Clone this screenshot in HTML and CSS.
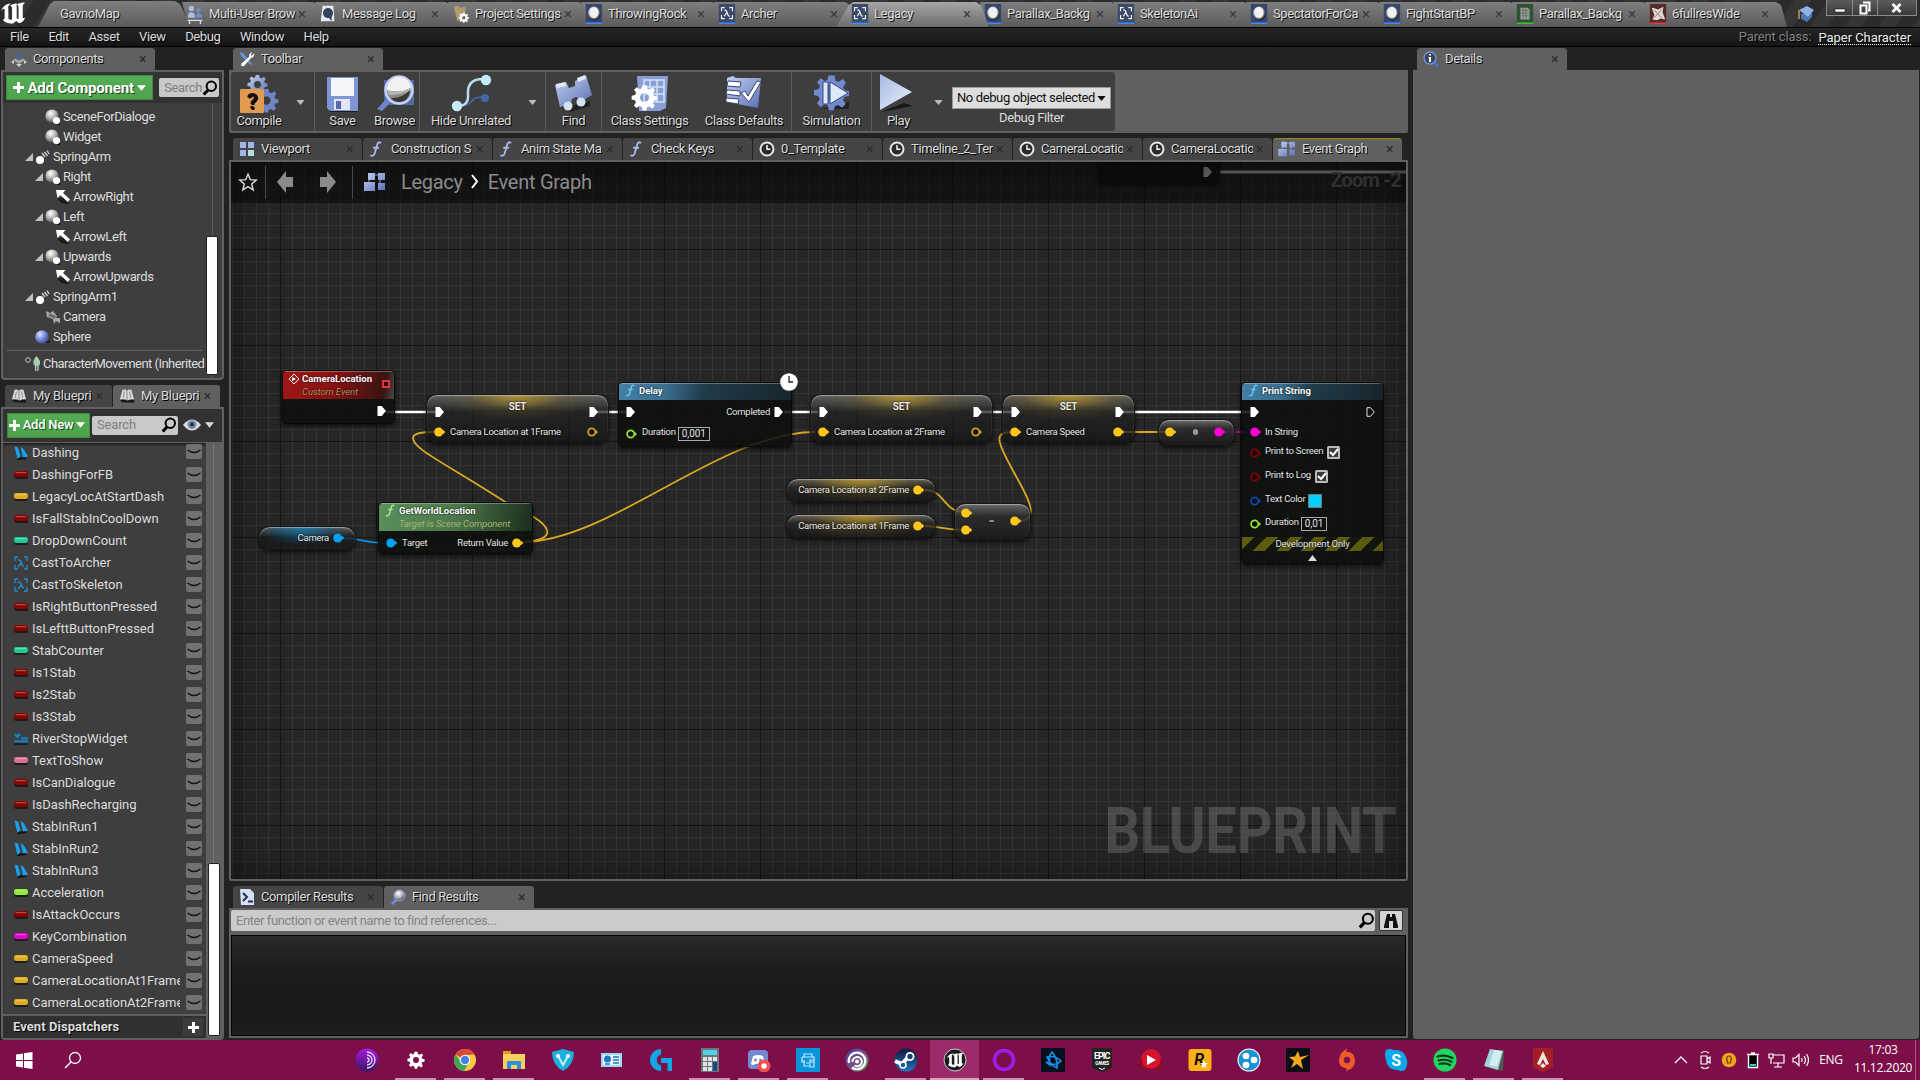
FILE: index.html
```html
<!DOCTYPE html>
<html lang="en">
<head>
<meta charset="utf-8">
<title>Legacy - Event Graph</title>
<link rel="stylesheet" href="styles.css">
</head>
<body>
<svg class="defs" width="0" height="0" aria-hidden="true">
  <defs>
    <linearGradient id="gBlue" x1="0" y1="0" x2="1" y2="1"><stop offset="0" stop-color="#c6d2f3"/><stop offset="1" stop-color="#5a6fb4"/></linearGradient>
    <linearGradient id="gPlay" x1="0" y1="0" x2="1" y2="1"><stop offset="0" stop-color="#a9b8e6"/><stop offset="1" stop-color="#e6f3f8"/></linearGradient>
    <radialGradient id="gBall" cx=".4" cy=".3" r=".7"><stop offset="0" stop-color="#fff"/><stop offset=".5" stop-color="#b9b9b9"/><stop offset="1" stop-color="#555"/></radialGradient>
    <radialGradient id="gSphere" cx=".35" cy=".3" r=".7"><stop offset="0" stop-color="#dfe6ff"/><stop offset=".5" stop-color="#7d93dc"/><stop offset="1" stop-color="#3d4c8c"/></radialGradient>
    <linearGradient id="gTor" x1="0" y1="0" x2="0" y2="1"><stop offset="0" stop-color="#a51be0"/><stop offset="1" stop-color="#3b1466"/></linearGradient>
    <linearGradient id="gSteam" x1="0" y1="0" x2="0" y2="1"><stop offset="0" stop-color="#12163a"/><stop offset="1" stop-color="#1c76b8"/></linearGradient>
    <linearGradient id="gUbi" x1="0" y1="0" x2="1" y2="1"><stop offset="0" stop-color="#36469c"/><stop offset=".5" stop-color="#7a4a8c"/><stop offset="1" stop-color="#58b04c"/></linearGradient>
    <symbol id="gear" viewBox="0 0 24 24"><path fill-rule="evenodd" d="M10 1h4l.6 3.2 2 .9L19.400 3.200l2 2.400-1.800 2.800.8 2L23.400 11v3.200l-3 .6-.9 2 1.700 2.700-2.300 2.400-2.700-1.800-2 .8L13.500 23.500h-3.200l-.7-3-2-.9-2.700 1.800-2.300-2.300 1.800-2.700-.9-2L.6 13.700v-3.300l3-.6.9-2L2.700 5.200 5 2.800l2.700 1.800 1.700-.8zM12 8a4 4 0 1 0 0 8 4 4 0 0 0 0-8z"/></symbol>
    <symbol id="exec" viewBox="0 0 9 10"><path d="M.5 0h4.200L9 5 4.700 10H.5z" fill="#fff"/></symbol>
    <symbol id="execo" viewBox="0 0 9 10"><path d="M1 .7h3.500L8.300 5 4.500 9.300H1z" fill="none" stroke="#e8e8e8" stroke-width="1"/></symbol>
    <symbol id="pin" viewBox="0 0 12 10"><circle cx="4.700" cy="5" r="4.500" fill="currentColor"/><path d="M9 2.800 11.300 5 9 7.200z" fill="currentColor"/></symbol>
    <symbol id="pino" viewBox="0 0 12 10"><circle cx="4.700" cy="5" r="3.600" fill="#0d0d0d" stroke="currentColor" stroke-width="1.800"/><path d="M9 3 11 5 9 7z" fill="currentColor"/></symbol>
    <symbol id="fn" viewBox="0 0 12 15"><path d="M11 2.200C10.500.8 8.600.700 7.800 2.800L5.200 11.800C4.500 14 2.500 14.400 1.300 13.200M3.800 6.300h5.400" fill="none" stroke="currentColor" stroke-width="1.700"/></symbol>
    <symbol id="comp" viewBox="0 0 16 16"><circle cx="7" cy="7" r="6.600" fill="url(#gBall)"/><path d="M12 15.900h3v-3z" fill="#111"/><circle cx="11.500" cy="11.500" r="3.600" fill="#fff"/></symbol>
    <symbol id="spring" viewBox="0 0 16 16"><circle cx="5" cy="11" r="4" fill="#fff"/><path d="m7 4 3 4M9.500 3l3 4M12 1.500 14 5" stroke="#c8c8c8" stroke-width="1.500"/></symbol>
    <symbol id="arrow" viewBox="0 0 16 16"><path d="M2 9h8l4 5v1L6 14z" fill="#1b1b1b"/><path d="M1 1h9.500L8 4l7 6.500-2.300 2.500L5.500 6.300 2.500 9z" fill="#fff"/></symbol>
    <symbol id="cam" viewBox="0 0 16 16"><path d="M1 2 5 4 8 2 12 7 11 9 15 9 15 14 11 12 9 15 8 10 2 8z" fill="#a9a9a9"/><path d="m5 4 6 3-1 3-7-3z" fill="#6f6f6f"/></symbol>
    <symbol id="tri" viewBox="0 0 8 8"><path d="M8 0v8H0z" fill="#c0c0c0"/></symbol>
    <symbol id="down" viewBox="0 0 10 6"><path d="M0 0h10L5 6z" fill="currentColor"/></symbol>
    <symbol id="mag" viewBox="0 0 16 16"><circle cx="9.300" cy="6.300" r="4.700" fill="none" stroke="#000" stroke-width="2"/><path d="m6 10-4.300 4.500" stroke="#000" stroke-width="3"/></symbol>
    <symbol id="shut" viewBox="0 0 16 15"><rect width="16" height="15" rx="2" fill="#717171"/><path d="M1.500 6Q8 11 14.500 6" fill="none" stroke="#111" stroke-width="1.500"/></symbol>
    <symbol id="pill" viewBox="0 0 14 8"><rect y="1.500" width="14" height="6.500" rx="2.500" fill="#1c1c1c"/><rect width="14" height="6" rx="2.200" fill="currentColor"/><rect x="1.500" y="1" width="11" height="1.300" rx=".6" fill="#fff" opacity=".3"/></symbol>
    <symbol id="dash" viewBox="0 0 14 14"><path d="m3 12 8-1 2 2-10 1z" fill="#111"/><path d="M.5.500 4 1.500 6.500 10l-3 3zM6.500 1l3 2 4.500 7.500-5 1z" fill="#1aa0f0"/></symbol>
    <symbol id="cast" viewBox="0 0 14 14"><path d="M4 1H1v4M10 1h3v4M4 13H1V9M10 13h3V9M4 4c5-1 2 6 6 6M8 6l-4 5" fill="none" stroke="#1c8fd6" stroke-width="1.300"/></symbol>
    <symbol id="widget" viewBox="0 0 16 14"><path d="M0 2 2.500.5 4 2 5.500.5 8 2 4 6.500zM8 5h8v2.500H8zM0 8.500h16V11H0z" fill="#1680c4"/><path d="M0 12h16v1.500H0z" fill="#111"/></symbol>
    <symbol id="bp" viewBox="0 0 18 22"><rect width="18" height="22" fill="#3b4a68"/><path d="M6.500 4H3v4M11.500 4H15v4M6.500 16H3v-4M11.500 16H15v-4M6 6.500c5 0 2 7 6 7M9 9l-3 4.500" fill="none" stroke="#f0f0f0" stroke-width="1.300"/><rect y="20.300" width="18" height="1.700" fill="#3f86ff"/></symbol>
    <symbol id="egg" viewBox="0 0 18 22"><rect width="18" height="22" fill="#35476e"/><ellipse cx="9.500" cy="11" rx="6.800" ry="7.500" fill="#1c2436"/><ellipse cx="9" cy="10" rx="6.500" ry="7.300" fill="url(#gBall)"/><ellipse cx="9" cy="9.500" rx="5" ry="6" fill="#f1f1f1"/><rect y="20.300" width="18" height="1.700" fill="#3f86ff"/></symbol>
    <symbol id="clock" viewBox="0 0 16 16"><circle cx="8" cy="8" r="6.500" fill="#2b2b2b" stroke="#e6e6e6" stroke-width="2"/><path d="M8 4v4.300h3.300" fill="none" stroke="#fff" stroke-width="1.400"/></symbol>
    <symbol id="graph" viewBox="0 0 24 20"><path d="M6 3h12M17 3v13M4 14 8 4" stroke="#8fa0d8"/><path d="M5 1h7v7H5zM15 1h7v7h-7zM1 10h11v9H1zM15 11h7v7h-7z" fill="url(#gBlue)"/></symbol>
    <symbol id="book" viewBox="0 0 18 16"><path d="m1 12 2 3 14 .5V12z" fill="#181818"/><path d="M4 1Q7 0 9 2q2-2 5-1l3 11q-4-1-7 1-4-2-9-1z" fill="#d8d8d8"/><path d="M9 2v11M6 3 5 10M12 3l1 7" stroke="#808080"/></symbol>
    <symbol id="ue" viewBox="0 0 28 28"><path d="M1 12Q4 4 12 3.500 8 6 9 9v11q1 2 4 1V10q0-4-3-4 7-3 8-2v16q1 1 2 0V8Q20 5 18 4.500 24 2 27 3q-3 2-2.500 5v11q2 1 3-1-2 6-7 7l-3-2.500-4 3Q5 25 3 21q2 0 2-2v-9Q4 8 1 12z" fill="currentColor"/></symbol>
  </defs>
</svg>

<header class="titlebar">
  <div class="logo"><svg width="26" height="26"><use href="#ue"/></svg></div>
  <div class="wtab first"><span>GavnoMap</span></div>
  <div class="wtab"><svg viewBox="0 0 18 22"><g fill="#a8bde0"><circle cx="5" cy="5" r="3"/><path d="M1 15q0-6 4-6t4 6z"/></g><g fill="#6f8dc4"><circle cx="13" cy="7" r="2.500"/><path d="M9.500 15q0-5 3.500-5t4 5z"/></g><path d="M1 18h16M3 18v4M15 18v4" stroke="#ddd" stroke-width="1.500"/></svg><span>Multi-User Brow</span><i>×</i></div>
  <div class="wtab"><svg viewBox="0 0 18 22"><path d="M3 2h12l1 17H1z" fill="#e4eaf0"/><circle cx="9" cy="10" r="5.500" fill="#31445c"/><path d="m9 14 4 5v-7z" fill="#31445c"/></svg><span>Message Log</span><i>×</i></div>
  <div class="wtab"><svg viewBox="0 0 18 22"><path d="m1 3 5-1 2 2 6-1v10l-9 6z" fill="#b39b70"/><use href="#gear" x="6" y="9" width="12" height="12" fill="#fff"/></svg><span>Project Settings</span><i>×</i></div>
  <div class="wtab"><svg><use href="#egg"/></svg><span>ThrowingRock</span><i>×</i></div>
  <div class="wtab"><svg><use href="#bp"/></svg><span>Archer</span><i>×</i></div>
  <div class="wtab active"><svg><use href="#bp"/></svg><span>Legacy</span><i>×</i></div>
  <div class="wtab"><svg><use href="#egg"/></svg><span>Parallax_Backg</span><i>×</i></div>
  <div class="wtab"><svg><use href="#bp"/></svg><span>SkeletonAi</span><i>×</i></div>
  <div class="wtab"><svg><use href="#egg"/></svg><span>SpectatorForCa</span><i>×</i></div>
  <div class="wtab"><svg><use href="#egg"/></svg><span>FightStartBP</span><i>×</i></div>
  <div class="wtab"><svg viewBox="0 0 18 22"><rect width="18" height="22" fill="#2f5233"/><path d="M4 4h8l2 2v11H4z" fill="#9a9f9a"/><path d="M5 7h8M5 10h8M5 13h8M7 5v11M10 5v11" stroke="#5c625c" stroke-width=".8"/><rect y="20.300" width="18" height="1.700" fill="#37c337"/></svg><span>Parallax_Backg</span><i>×</i></div>
  <div class="wtab"><svg viewBox="0 0 18 22"><rect width="18" height="22" fill="#572a2a"/><path d="m2 4 4 1 3 1 6-3-1 6 3 8-5-1-4 2-5-1 2-5z" fill="#e2d8d8"/><path d="m5 7 8 8M13 6l-8 9" stroke="#8c7474"/><rect y="20.300" width="18" height="1.700" fill="#e03c3c"/></svg><span>6fullresWide</span><i>×</i></div>
  <div class="wincontrols">
    <svg class="cap" width="18" height="16" viewBox="0 0 18 16"><path d="M4 8v5l6 3 5-5V7z" fill="#4f74b0"/><path d="m2 4 8-4 7 4-6 7z" fill="#8db4e8"/><path d="M2 4v9" stroke="#c89a50" stroke-width="1.500"/></svg>
    <div class="wbtns">
      <b><svg width="12" height="15"><path d="M1 9h10v3H1z" fill="#fff" stroke="#000" stroke-width=".5"/></svg></b>
      <b><svg width="12" height="14"><path d="M4 1.500h6.500v8H9M1.500 4.500h6v8h-6z" fill="none" stroke="#fff" stroke-width="2"/></svg></b>
      <b class="wide"><svg width="12" height="12"><path d="m1.500 2 8 8M9.500 2l-8 8" stroke="#fff" stroke-width="2.700"/></svg></b>
    </div>
  </div>
</header>

<nav class="menubar">
  <span>File</span><span>Edit</span><span>Asset</span><span>View</span><span>Debug</span><span>Window</span><span>Help</span>
  <div class="parent"><em>Parent class:</em><a>Paper Character</a></div>
</nav>

<main class="workspace">
  <aside class="left">
    <section class="dock components">
      <div class="tabs"><div class="tab on w150"><svg viewBox="0 0 16 16"><path d="m2 9 3-2h6l3 2-6 4z" fill="#a6a6a6"/><circle cx="8" cy="5" r="4" fill="#51617d"/><path d="m8 16-3-3h6zM0 11l3-2v4zM16 11l-3-2v4z" fill="#d0d0d0"/></svg><span>Components</span><i>×</i></div></div>
      <div class="frame">
        <div class="searchrow">
          <div class="green big"><svg width="11" height="11"><path d="M4 0h3v4h4v3H7v4H4V7H0V4h4z" fill="#fff"/></svg><span>Add Component</span><svg width="9" height="6"><use href="#down"/></svg></div>
          <div class="search s1"><span>Search</span><svg width="16" height="16"><use href="#mag"/></svg></div>
        </div>
        <div class="treewrap">
          <div class="tree">
            <div class="trow l3"><svg class="ic"><use href="#comp"/></svg>SceneForDialoge</div>
            <div class="trow l3"><svg class="ic"><use href="#comp"/></svg>Widget</div>
            <div class="trow l2"><svg class="tw"><use href="#tri"/></svg><svg class="ic"><use href="#spring"/></svg>SpringArm</div>
            <div class="trow l3"><svg class="tw"><use href="#tri"/></svg><svg class="ic"><use href="#comp"/></svg>Right</div>
            <div class="trow l4"><svg class="ic"><use href="#arrow"/></svg>ArrowRight</div>
            <div class="trow l3"><svg class="tw"><use href="#tri"/></svg><svg class="ic"><use href="#comp"/></svg>Left</div>
            <div class="trow l4"><svg class="ic"><use href="#arrow"/></svg>ArrowLeft</div>
            <div class="trow l3"><svg class="tw"><use href="#tri"/></svg><svg class="ic"><use href="#comp"/></svg>Upwards</div>
            <div class="trow l4"><svg class="ic"><use href="#arrow"/></svg>ArrowUpwards</div>
            <div class="trow l2"><svg class="tw"><use href="#tri"/></svg><svg class="ic"><use href="#spring"/></svg>SpringArm1</div>
            <div class="trow l3"><svg class="ic"><use href="#cam"/></svg>Camera</div>
            <div class="trow l2"><svg class="ic" viewBox="0 0 16 16"><path d="M4 14h11v-3z" fill="#1b1b1b"/><circle cx="7" cy="8" r="6.800" fill="url(#gSphere)"/></svg>Sphere</div>
            <hr>
            <div class="trow move"><svg width="17" height="16" viewBox="0 0 17 16"><circle cx="3" cy="4" r="2.300" fill="none" stroke="#b8c8b8"/><path d="M10 2a1.500 1.500 0 1 1 3 0l2 3v4h-1V6l-.5 9h-1.200v-5h-1v5h-1.200L9.500 6v3h-1V5z" fill="#a9d0b4"/></svg>CharacterMovement (Inherited</div>
          </div>
          <div class="sb"><div class="thumb"></div></div>
        </div>
      </div>
    </section>
    <section class="dock myblueprint">
      <div class="tabs"><div class="tab w107"><svg viewBox="0 0 18 16"><use href="#book"/></svg><span>My Bluepri</span><i>×</i></div><div class="tab on w107"><svg viewBox="0 0 18 16"><use href="#book"/></svg><span>My Bluepri</span><i>×</i></div></div>
      <div class="frame">
        <div class="addrow">
          <div class="green small"><svg width="11" height="11"><path d="M4 0h3v4h4v3H7v4H4V7H0V4h4z" fill="#fff"/></svg><span>Add New</span><svg width="9" height="6"><use href="#down"/></svg></div>
          <div class="search s2"><span>Search</span><svg width="16" height="16"><use href="#mag"/></svg></div>
          <svg width="18" height="12" viewBox="0 0 18 12"><path d="M0 6Q9-5 18 6 9 17 0 6z" fill="#d9d9d9"/><circle cx="9" cy="5.500" r="4.300" fill="#6f87b0"/><circle cx="9" cy="5.500" r="2" fill="#28303e"/></svg>
          <svg width="9" height="6"><use href="#down"/></svg>
        </div>
        <div class="varwrap">
          <div class="vars">
            <div class="v"><svg class="vi"><use href="#dash"/></svg><span>Dashing</span><svg class="sh"><use href="#shut"/></svg></div>
            <div class="v red"><svg class="vp"><use href="#pill"/></svg><span>DashingForFB</span><svg class="sh"><use href="#shut"/></svg></div>
            <div class="v yel"><svg class="vp"><use href="#pill"/></svg><span>LegacyLocAtStartDash</span><svg class="sh"><use href="#shut"/></svg></div>
            <div class="v red"><svg class="vp"><use href="#pill"/></svg><span>IsFallStabInCoolDown</span><svg class="sh"><use href="#shut"/></svg></div>
            <div class="v teal"><svg class="vp"><use href="#pill"/></svg><span>DropDownCount</span><svg class="sh"><use href="#shut"/></svg></div>
            <div class="v"><svg class="vi"><use href="#cast"/></svg><span>CastToArcher</span><svg class="sh"><use href="#shut"/></svg></div>
            <div class="v"><svg class="vi"><use href="#cast"/></svg><span>CastToSkeleton</span><svg class="sh"><use href="#shut"/></svg></div>
            <div class="v red"><svg class="vp"><use href="#pill"/></svg><span>IsRightButtonPressed</span><svg class="sh"><use href="#shut"/></svg></div>
            <div class="v red"><svg class="vp"><use href="#pill"/></svg><span>IsLefttButtonPressed</span><svg class="sh"><use href="#shut"/></svg></div>
            <div class="v teal"><svg class="vp"><use href="#pill"/></svg><span>StabCounter</span><svg class="sh"><use href="#shut"/></svg></div>
            <div class="v red"><svg class="vp"><use href="#pill"/></svg><span>Is1Stab</span><svg class="sh"><use href="#shut"/></svg></div>
            <div class="v red"><svg class="vp"><use href="#pill"/></svg><span>Is2Stab</span><svg class="sh"><use href="#shut"/></svg></div>
            <div class="v red"><svg class="vp"><use href="#pill"/></svg><span>Is3Stab</span><svg class="sh"><use href="#shut"/></svg></div>
            <div class="v"><svg class="vi"><use href="#widget"/></svg><span>RiverStopWidget</span><svg class="sh"><use href="#shut"/></svg></div>
            <div class="v pink"><svg class="vp"><use href="#pill"/></svg><span>TextToShow</span><svg class="sh"><use href="#shut"/></svg></div>
            <div class="v red"><svg class="vp"><use href="#pill"/></svg><span>IsCanDialogue</span><svg class="sh"><use href="#shut"/></svg></div>
            <div class="v red"><svg class="vp"><use href="#pill"/></svg><span>IsDashRecharging</span><svg class="sh"><use href="#shut"/></svg></div>
            <div class="v"><svg class="vi"><use href="#dash"/></svg><span>StabInRun1</span><svg class="sh"><use href="#shut"/></svg></div>
            <div class="v"><svg class="vi"><use href="#dash"/></svg><span>StabInRun2</span><svg class="sh"><use href="#shut"/></svg></div>
            <div class="v"><svg class="vi"><use href="#dash"/></svg><span>StabInRun3</span><svg class="sh"><use href="#shut"/></svg></div>
            <div class="v lime"><svg class="vp"><use href="#pill"/></svg><span>Acceleration</span><svg class="sh"><use href="#shut"/></svg></div>
            <div class="v red"><svg class="vp"><use href="#pill"/></svg><span>IsAttackOccurs</span><svg class="sh"><use href="#shut"/></svg></div>
            <div class="v mag"><svg class="vp"><use href="#pill"/></svg><span>KeyCombination</span><svg class="sh"><use href="#shut"/></svg></div>
            <div class="v yel"><svg class="vp"><use href="#pill"/></svg><span>CameraSpeed</span><svg class="sh"><use href="#shut"/></svg></div>
            <div class="v yel"><svg class="vp"><use href="#pill"/></svg><span>CameraLocationAt1Frame</span><svg class="sh"><use href="#shut"/></svg></div>
            <div class="v yel"><svg class="vp"><use href="#pill"/></svg><span>CameraLocationAt2Frame</span><svg class="sh"><use href="#shut"/></svg></div>
            <div class="disp"><span>Event Dispatchers</span><b><svg width="11" height="11"><path d="M4 0h3v4h4v3H7v4H4V7H0V4h4z" fill="#fff"/></svg></b></div>
          </div>
          <div class="sb"><div class="thumb"></div></div>
        </div>
      </div>
    </section>
  </aside>

  <section class="center">
    <div class="tabs"><div class="tab on w150"><svg viewBox="0 0 16 16"><path d="m1 1 3 1 9 11-1 1L2 5z" fill="#5b9be0"/><path d="M15 2q1 4-3 5L5 15q-3 1-3-2l8-7q0-4 3-5l-1 3 1 1z" fill="#fff"/></svg><span>Toolbar</span><i>×</i></div></div>
    <div class="toolframe">
      <div class="toolbar">
        <div class="tool t-compile"><svg width="40" height="40" viewBox="0 0 40 40"><use href="#gear" x="8" y="1" width="21" height="21" fill="url(#gBlue)"/><use href="#gear" x="15" y="15" width="25" height="25" fill="#6e84c4"/><rect x="1" y="16" width="24" height="24" rx="1" fill="#e09a52"/><text x="13" y="36" font-size="22" font-weight="700" text-anchor="middle" fill="#111">?</text></svg><span>Compile</span></div>
        <svg class="dd" width="9" height="5" viewBox="0 0 10 6"><use href="#down"/></svg>
        <div class="tool t-save"><svg width="40" height="40" viewBox="0 0 40 40"><path d="M7 39h28l-3-4H7z" fill="#1b1b1b"/><path d="M4 4h31v34H7l-3-3z" fill="#7e95d6"/><path d="M8 5h23v18H8z" fill="#f4f6fb"/><path d="M11 26h16v11H11z" fill="#e2e6f2"/><path d="M13 28h5v8h-5z" fill="#5569ab"/></svg><span>Save</span></div>
        <div class="tool t-browse"><svg width="42" height="40" viewBox="0 0 42 40"><path d="M9 7h30v25H9z" fill="#52699f"/><path d="M2 36 14 23l4 4L7 38z" fill="#6d86c8"/><circle cx="24" cy="17" r="13.500" fill="#8a8a8a" stroke="#c3d2f6" stroke-width="2.500"/><path d="M12 17a12 12 0 0 1 24-2q-12 6-24 2z" fill="#f2f2f2"/><path d="M12 17q12 4 24-2v3q-12 4-22 4z" fill="#b5b5b5"/><path d="M16 25q10 1 19-8-1 12-11 12-5 0-8-4z" fill="#383838"/></svg><span>Browse</span></div>
        <div class="tool t-hide"><svg width="42" height="40" viewBox="0 0 42 40"><path d="M6 34q12-2 15-6 2-4 12-4" fill="none" stroke="#4a5f96" stroke-width="2"/><circle cx="34" cy="25" r="4" fill="#4865a8"/><path d="M7 33q11 0 10-12Q16 6 32 6" fill="none" stroke="#b9dcef" stroke-width="2.500"/><circle cx="35" cy="7" r="5.200" fill="#c6ebf8"/><circle cx="6" cy="33" r="5.200" fill="#c6ebf8"/></svg><span>Hide Unrelated</span></div>
        <svg class="dd" width="9" height="5" viewBox="0 0 10 6"><use href="#down"/></svg>
        <div class="tool t-find"><svg width="40" height="40" viewBox="0 0 40 40"><path d="m9 35 24-5 4-3v6l-20 6z" fill="#202020"/><path d="m2 12 11-3 3 6 6-2V8l11-6 6 20-10 6-6-4-4 2-1 5-11 3z" fill="url(#gBlue)"/><path d="m24 5 8-3 1 4-8 3zM3 11l9-2 1 4-9 2z" fill="#e4e9f5"/><circle cx="15" cy="33" r="4.500" fill="#d6e2ee"/><circle cx="28" cy="29" r="4.500" fill="#d6e2ee"/></svg><span>Find</span></div>
        <div class="tool t-cs"><svg width="42" height="40" viewBox="0 0 42 40"><path d="M8 3h31l-2 32-6 3H10z" fill="#8a9fd8"/><path d="M15 7h20v22H15zM21 7v22M28 7v22M15 14h20M15 21h20" fill="none" stroke="#d2e4f4" stroke-width="1.500"/><use href="#gear" x="2" y="11" width="27" height="27" fill="#fff"/></svg><span>Class Settings</span></div>
        <div class="tool t-cd"><svg width="40" height="40" viewBox="0 0 40 40"><path d="m3 5 6-2 3 2h25l-3 30-31-6z" fill="url(#gBlue)"/><path d="m4 8 13 1-1 5-13-1zM3 17l13 1v5L2 21zM2 25l13 1-1 5-12-2z" fill="#fff" stroke="#38457a" stroke-width="1"/><path d="m17 20 4-2 3 5L33 8l4 1-12 20z" fill="#fff" stroke="#38457a"/></svg><span>Class Defaults</span></div>
        <div class="tool t-sim"><svg width="42" height="40" viewBox="0 0 42 40"><path d="M10 36h28v-7z" fill="#222"/><use href="#gear" x="2" y="1" width="37" height="37" fill="#7088cc"/><circle cx="20.500" cy="19.500" r="8" fill="#4d62a6"/><path d="M12 9h5v22h-5zM19 9l18 11-18 11z" fill="#dde9f5" stroke="#3c4d88"/></svg><span>Simulation</span></div>
        <div class="tool t-play"><svg width="36" height="40" viewBox="0 0 36 40"><path d="m2 39 32-6-9-3z" fill="#161616"/><path d="m1 1 32 18L1 37z" fill="url(#gPlay)"/></svg><span>Play</span></div>
        <svg class="dd" width="9" height="5" viewBox="0 0 10 6"><use href="#down"/></svg>
        <div class="debug"><div class="combo"><span>No debug object selected</span><svg width="9" height="5" viewBox="0 0 10 6"><use href="#down"/></svg></div><span>Debug Filter</span></div>
      </div>
    </div>

    <div class="tabs doc">
      <div class="tab w129"><svg viewBox="0 0 16 16"><path d="M1 1h6v6H1zM9 1h6v6H9zM1 9h6v6H1z" fill="#9fb6ea"/><path d="M9 9h6v6H9z" fill="#b4e0dc"/></svg><span>Viewport</span><i>×</i></div>
      <div class="tab w129 f"><svg><use href="#fn"/></svg><span>Construction S</span><i>×</i></div>
      <div class="tab w129 f"><svg><use href="#fn"/></svg><span>Anim State Ma</span><i>×</i></div>
      <div class="tab w129 f"><svg><use href="#fn"/></svg><span>Check Keys</span><i>×</i></div>
      <div class="tab w129"><svg><use href="#clock"/></svg><span>0_Template</span><i>×</i></div>
      <div class="tab w129"><svg><use href="#clock"/></svg><span>Timeline_2_Ter</span><i>×</i></div>
      <div class="tab w129"><svg><use href="#clock"/></svg><span>CameraLocatio</span><i>×</i></div>
      <div class="tab w129"><svg><use href="#clock"/></svg><span>CameraLocatio</span><i>×</i></div>
      <div class="tab on major w129"><svg><use href="#graph"/></svg><span>Event Graph</span><i>×</i></div>
    </div>
    <div class="graphframe">
      <div class="graph">
        <!-- wires share the canvas coordinate system with the nodes -->
        <svg class="wires" width="1175" height="717" viewBox="231 162 1175 717" fill="none">
          <g stroke="#fff" stroke-width="2.500"><path d="M386 412h50M597 412h30M784 412h34M982 412h30M1124 412h126"/></g>
          <path d="M1216 172h190" stroke="#fff" stroke-width="3"/>
          <g stroke="#d9a824" stroke-width="1.800"><path d="M522 542C562 540 552 523 510 505C440 460 413 449 413 438C413 433 422 432 434 432"/><path d="M522 542C610 542 720 432 815 432"/><path d="M925 490c20 0 18 22 40 22M925 526c14 0 18 4 40 4M1018 521c28 0 3-34-8-56-14-26-15-33 2-33M1124 432h42"/></g>
          <path d="M343 538c18 0 20 5 42 5" stroke="#0f8fe0" stroke-width="1.800"/>
          <path d="M1224 432h26" stroke="#c800a8" stroke-width="1.800"/>
        </svg>

        <div class="node std offscreen"><svg class="ex"><use href="#exec"/></svg></div>
        <div class="node std n-event">
          <div class="head redh"><svg width="12" height="12" viewBox="0 0 12 12"><path d="m6 1 5 5-5 5-5-5z" fill="none" stroke="#fff"/><path d="m4 4 4 2-4 2z" fill="#fff"/></svg><div><b>CameraLocation</b><em>Custom Event</em></div><svg width="9" height="9" class="deleg"><rect x="1" y="1" width="6" height="6" fill="#300" stroke="#ff3b3b" stroke-width="1.700"/></svg></div>
          <div class="row end"><svg class="ex"><use href="#exec"/></svg></div>
        </div>
        <div class="node var n-set1"><h4>SET</h4><div class="row x"><svg class="ex"><use href="#exec"/></svg><svg class="ex"><use href="#exec"/></svg></div><div class="row"><svg class="pn"><use href="#pin"/></svg><span>Camera Location at 1Frame</span><svg class="pn out dim"><use href="#pino"/></svg></div></div>
        <div class="node std n-delay">
          <div class="head blueh"><svg width="10" height="13" viewBox="0 0 12 15"><use href="#fn"/></svg><div><b>Delay</b></div></div>
          <div class="row d1"><svg class="ex"><use href="#exec"/></svg><span class="out">Completed</span><svg class="ex"><use href="#exec"/></svg></div>
          <div class="row d2 lime2"><svg class="pn"><use href="#pino"/></svg><span>Duration</span><output>0,001</output></div>
          <svg class="latent" width="20" height="20"><circle cx="10" cy="10" r="8.800" fill="#fff"/><path d="M10 4v6h4" fill="none" stroke="#222" stroke-width="1.300"/></svg>
        </div>
        <div class="node var n-set2"><h4>SET</h4><div class="row x"><svg class="ex"><use href="#exec"/></svg><svg class="ex"><use href="#exec"/></svg></div><div class="row"><svg class="pn"><use href="#pin"/></svg><span>Camera Location at 2Frame</span><svg class="pn out dim"><use href="#pino"/></svg></div></div>
        <div class="node var n-set3"><h4>SET</h4><div class="row x"><svg class="ex"><use href="#exec"/></svg><svg class="ex"><use href="#exec"/></svg></div><div class="row"><svg class="pn"><use href="#pin"/></svg><span>Camera Speed</span><svg class="pn out"><use href="#pin"/></svg></div></div>
        <div class="node std n-world">
          <div class="head greenh"><svg width="10" height="13" viewBox="0 0 12 15"><use href="#fn"/></svg><div><b>GetWorldLocation</b><em>Target is Scene Component</em></div></div>
          <div class="row"><svg class="pn blue"><use href="#pin"/></svg><span>Target</span><span class="out">Return Value</span><svg class="pn"><use href="#pin"/></svg></div>
        </div>
        <div class="node var get cyan n-cam"><span>Camera</span><svg class="pn blue"><use href="#pin"/></svg></div>
        <div class="node var get n-g2"><span>Camera Location at 2Frame</span><svg class="pn"><use href="#pin"/></svg></div>
        <div class="node var get n-g1"><span>Camera Location at 1Frame</span><svg class="pn"><use href="#pin"/></svg></div>
        <div class="node var plain n-sub"><div class="ins"><svg class="pn"><use href="#pin"/></svg><svg class="pn"><use href="#pin"/></svg></div><b>-</b><svg class="pn"><use href="#pin"/></svg></div>
        <div class="node var plain n-conv"><svg class="pn"><use href="#pin"/></svg><b class="dot"></b><svg class="pn magenta"><use href="#pin"/></svg></div>
        <div class="node std n-print">
          <div class="head blueh"><svg width="10" height="13" viewBox="0 0 12 15"><use href="#fn"/></svg><div><b>Print String</b></div></div>
          <div class="row p1"><svg class="ex"><use href="#exec"/></svg><svg class="ex out"><use href="#execo"/></svg></div>
          <div class="row p2 magenta"><svg class="pn"><use href="#pin"/></svg><span>In String</span></div>
          <div class="row p3 dred"><svg class="pn"><use href="#pino"/></svg><span>Print to Screen</span><svg class="chk" viewBox="0 0 13 13"><rect width="13" height="13" rx="1.500" fill="#bbb"/><rect x="2" y="2" width="9" height="9" fill="#3a3a3a"/><path d="m3 6 3 3 5-6" stroke="#fff" stroke-width="2" fill="none"/></svg></div>
          <div class="row p3 dred"><svg class="pn"><use href="#pino"/></svg><span>Print to Log</span><svg class="chk" viewBox="0 0 13 13"><rect width="13" height="13" rx="1.500" fill="#bbb"/><rect x="2" y="2" width="9" height="9" fill="#3a3a3a"/><path d="m3 6 3 3 5-6" stroke="#fff" stroke-width="2" fill="none"/></svg></div>
          <div class="row p4 dblue"><svg class="pn"><use href="#pino"/></svg><span>Text Color</span><u class="swatch"></u></div>
          <div class="row p5 lime2"><svg class="pn"><use href="#pino"/></svg><span>Duration</span><output>0,01</output></div>
          <div class="dev">Development Only</div>
          <div class="adv"><svg width="9" height="6"><path d="M0 6h9L4.500 0z" fill="#ddd"/></svg></div>
        </div>

        <div class="crumbs">
          <svg class="star" width="20" height="20" viewBox="0 0 20 20"><path d="m10 2 2.300 5.700 6 .4-4.600 3.900 1.500 6-5.200-3.300L4.800 18l1.500-6L1.700 8.100l6-.4z" fill="none" stroke="#ddd" stroke-width="1.400"/></svg>
          <svg class="nav1" width="17" height="22"><path d="M0 11 9 0v6h7v10H9v6z" fill="#8b8b8b"/></svg>
          <svg class="nav2" width="17" height="22"><path d="M17 11 8 0v6H1v10h7v6z" fill="#8b8b8b"/></svg>
          <svg class="gi" width="24" height="20"><use href="#graph"/></svg>
          <span>Legacy</span><svg class="chev" width="8" height="15"><path d="m1 1 5 6.500L1 14" fill="none" stroke="#fff" stroke-width="2"/></svg><span>Event Graph</span>
          <strong>Zoom -2</strong>
        </div>
        <div class="watermark">BLUEPRINT</div>
      </div>
    </div>

    <div class="tabs res">
      <div class="tab w150"><svg viewBox="0 0 16 16"><path d="M1 0h10l4 4v12H2z" fill="#d5e0f4"/><path d="m4 4 4 4-4 4M9 12.500h5" stroke="#26324e" stroke-width="2" fill="none"/></svg><span>Compiler Results</span><i>×</i></div>
      <div class="tab on w150"><svg viewBox="0 0 16 16"><path d="m1 14 5-5 2 2-5 5z" fill="#6d8ae0"/><circle cx="9.500" cy="6.500" r="5.500" fill="url(#gBall)" stroke="#8aa2e0"/></svg><span>Find Results</span><i>×</i></div>
    </div>
    <div class="results">
      <div class="findrow"><div class="find"><span>Enter function or event name to find references...</span><svg width="17" height="17"><use href="#mag"/></svg></div><div class="bino"><svg width="14" height="14"><path d="M3 0h3v3h2V0h3l3 12v2H9V7H5v7H0v-2z" fill="#111"/></svg></div></div>
      <div class="list"></div>
    </div>
  </section>

  <aside class="details">
    <div class="tabs"><div class="tab on w150"><svg viewBox="0 0 16 16"><path d="m10 10 5 5" stroke="#4a6de0" stroke-width="2.500"/><circle cx="7" cy="7" r="6" fill="#3e4654" stroke="#6f93e6" stroke-width="1.300"/><path d="M6 3h2v1.500H6zM5.500 6H8v5H6V7h-.5z" fill="#fff"/></svg><span>Details</span><i>×</i></div></div>
    <div class="body"></div>
  </aside>
</main>

<footer class="taskbar">
  <div class="start"><svg width="17" height="17"><path d="m0 2.500 7-1V8H0zM8 1.300 16.500 0v8H8zM0 9h7v6.500l-7-1zM8 9h8.500v8L8 15.700z" fill="#fff"/></svg><svg width="18" height="18"><circle cx="11" cy="7" r="5.500" fill="none" stroke="#fff" stroke-width="1.300"/><path d="M7 11 1 17" stroke="#fff" stroke-width="1.500"/></svg></div>
  <div class="apps">
    <div><svg viewBox="0 0 24 24"><circle cx="12" cy="12" r="11.500" fill="url(#gTor)"/><path d="M12 4a8 8 0 0 1 0 16M12 7a5 5 0 0 1 0 10M12 10a2 2 0 0 1 0 4" fill="none" stroke="#e8d8f8" stroke-width="1.300"/></svg></div>
    <div class="run"><svg viewBox="0 0 24 24"><use href="#gear" x="3" y="3" width="18" height="18" fill="#fff"/></svg></div>
    <div class="run"><svg viewBox="0 0 24 24"><circle cx="12" cy="12" r="11" fill="#f6c945"/><path d="M12 12 2.500 6.500A11 11 0 0 1 21.500 6.500L12 7z" fill="#d9493a"/><path d="M2.500 6.500A11 11 0 0 0 11 23l5-9-8 0z" fill="#3fa456"/><circle cx="12" cy="12" r="5.300" fill="#fff"/><circle cx="12" cy="12" r="4.200" fill="#4580e8"/></svg></div>
    <div class="run"><svg viewBox="0 0 24 24"><path d="M1 3h8v3h14v15H1z" fill="#fbd25b"/><path d="M1 3h8v3H1z" fill="#e39b1a"/><path d="M5 13h14v8h-4v-4H9v4H5z" fill="#2f8ee0"/></svg></div>
    <div><svg viewBox="0 0 24 24"><path d="M1 4 12 1l11 3q0 13-11 19Q1 17 1 4z" fill="#1cb0e0"/><path d="m7 8 5 9 5-9" stroke="#c9f0fb" stroke-width="2" fill="none"/><circle cx="7" cy="8" r="2" fill="#fff"/><circle cx="17" cy="8" r="2" fill="#fff"/></svg></div>
    <div><svg viewBox="0 0 24 24"><path d="M1 5h21v14H1z" fill="#9ad9f7"/><path d="M3 7h17v10H3z" fill="#e5f6fd"/><circle cx="7.500" cy="11" r="3.500" fill="#1d78c8"/><path d="M13 9h6M13 12h6M13 15h6M5 16h5" stroke="#2474bc" stroke-width="1.500"/></svg></div>
    <div><svg viewBox="0 0 24 24"><path d="M12 1v5.500a5.700 5.700 0 0 0 0 11V23A11 11 0 0 1 12 1zM12 10h11v13h-4.500v-8H12z" fill="#12a5e4"/></svg></div>
    <div class="run"><svg viewBox="0 0 24 24"><path d="M3 0h18v24H3z" fill="#6f7579"/><path d="M5 2h14v5H5z" fill="#4fd2ee"/><path d="M5 9h4v4H5zM10 9h4v4h-4zM15 9h4v4h-4zM5 14h4v4H5zM10 14h4v4h-4zM5 19h4v4H5zM10 19h4v4h-4z" fill="#dfe3e6"/><path d="M15 14h4v9h-4z" fill="#124a85"/></svg></div>
    <div class="run"><svg viewBox="0 0 24 24"><rect x="1" y="2" width="20" height="19" rx="4" fill="#7488d4"/><path d="M6 8q5-2 10 0l2 8q-3 2-4 0H8q-2 2-4 0z" fill="#fff"/><circle cx="8.500" cy="12" r="1.500" fill="#7488d4"/><circle cx="13.500" cy="12" r="1.500" fill="#7488d4"/><circle cx="17" cy="18" r="6.500" fill="#ef5350"/><circle cx="17" cy="18" r="2.700" fill="#fff"/></svg></div>
    <div class="run"><svg viewBox="0 0 24 24"><path d="M0 0h24v24H0z" fill="#0a96dc"/><path d="M8 9V6h8v3M6 9h12v5h-3M6 9v5h3M8 12v6h5M14 12h4v7h-4zM10 15h3" fill="none" stroke="#c9eafa" stroke-width="1.200"/></svg></div>
    <div><svg viewBox="0 0 24 24"><circle cx="12" cy="12" r="11.500" fill="url(#gUbi)"/><path d="M4 15a8.300 8.300 0 1 1 3 4.500" fill="none" stroke="#fff" stroke-width="2.200"/><path d="M7.500 14a4.700 4.700 0 1 1 2 3.500" fill="none" stroke="#fff" stroke-width="2"/><circle cx="12" cy="13.500" r="2" fill="#fff"/></svg></div>
    <div class="run"><svg viewBox="0 0 24 24"><circle cx="12" cy="12" r="11.500" fill="url(#gSteam)"/><path d="m1 13 7 3 7-8" fill="none" stroke="#fff" stroke-width="4"/><circle cx="16" cy="8.500" r="3.600" fill="#1a3f70" stroke="#fff" stroke-width="1.800"/><circle cx="9" cy="17" r="3" fill="#1c5a92" stroke="#fff" stroke-width="1.500"/></svg></div>
    <div class="run cur"><svg viewBox="0 0 24 24"><circle cx="12" cy="12" r="11" fill="#1c1c1c" stroke="#ccc"/><g color="#fff"><use href="#ue" x="3" y="3" width="18" height="18"/></g></svg></div>
    <div class="run"><svg viewBox="0 0 24 24"><circle cx="12" cy="12" r="9.500" fill="none" stroke="#9b1fe8" stroke-width="3.500"/></svg></div>
    <div><svg viewBox="0 0 24 24"><path d="M0 0h24v24H0z" fill="#06101c"/><path d="M5 14q9 5 15-1-6-6-14-4 4 9 10 11 1-9-5-16-4 4-2 13z" fill="none" stroke="#1590e8" stroke-width="1.700"/></svg></div>
    <div><svg viewBox="0 0 24 24"><path d="M2 0h20v20l-10 4-10-4z" fill="#222"/><text x="12" y="11" text-anchor="middle" font-size="9" font-weight="700" textLength="16" fill="#fff">EPIC</text><text x="12" y="17" text-anchor="middle" font-size="4.500" font-weight="700" fill="#fff">GAMES</text><path d="m9 20 3 1.500 3-1.500" stroke="#fff" fill="none"/></svg></div>
    <div><svg viewBox="0 0 24 24"><circle cx="12" cy="11" r="10" fill="#d6122c"/><path d="M2 12q-2 7 4 9M22 12q2 6-4 10" stroke="#8f0d1f" stroke-width="3" fill="none"/><path d="m8 7 9 5-9 5z" fill="#fff"/></svg></div>
    <div><svg viewBox="0 0 24 24"><rect x=".5" y="1" width="23" height="22" rx="3" fill="#fcaf17"/><text x="11" y="17" text-anchor="middle" font-size="16" font-weight="700" font-style="italic" fill="#111">R</text><path d="m16 12 1 3 3 .2-2.300 2 .8 3-2.500-1.700-2.500 1.700.8-3-2.300-2 3-.2z" fill="#fff"/></svg></div>
    <div><svg viewBox="0 0 24 24"><circle cx="12" cy="12" r="11.500" fill="#fff"/><circle cx="12" cy="12" r="10.500" fill="#1a92d6"/><circle cx="9" cy="8" r="3.300" fill="#fff"/><circle cx="17" cy="12" r="3.300" fill="#fff"/><circle cx="9" cy="17" r="3.300" fill="#fff"/></svg></div>
    <div><svg viewBox="0 0 24 24"><path d="M0 0h24v24H0z" fill="#0b0e14"/><path d="m12 3 2 6 9-2-8 5 2 9-6-5-6 4 3-7-5-4 6-.500z" fill="#f5a623"/></svg></div>
    <div><svg viewBox="0 0 24 24"><path d="M13 0q-2 2-2 3.500 9 .5 9 8.500 0 8-7 10l-2 2q1-2 .500-3.500-8-1-7.500-8.500Q4.500 4 13 0z" fill="#ee5b2b"/><circle cx="12" cy="12" r="3.200" fill="#7c0f48"/></svg></div>
    <div><svg viewBox="0 0 24 24"><path d="M2 2q4-2 8 0 9-1 12 7 3 7-1 13-4 2-7 0Q3 22 2 12 0 6 2 2z" fill="#08a8ec"/><text x="12" y="17.500" text-anchor="middle" font-size="16" font-weight="700" fill="#fff">S</text></svg></div>
    <div class="run"><svg viewBox="0 0 24 24"><circle cx="12" cy="12" r="11.500" fill="#1ed760"/><path d="M4.500 8.500q8-2.500 15 1.500M5.500 12.500q7-2 13 1.200M6.500 16q6-1.500 10.500 1" fill="none" stroke="#10331c" stroke-width="2.200" stroke-linecap="round"/></svg></div>
    <div class="run"><svg viewBox="0 0 24 24"><path d="M9 2h13l-1 20-4 1z" fill="#4e5a50"/><path d="m8 1 13 2-5 19-14-4z" fill="#9fd3e0"/><path d="m12 2 8 1-5 16-8-2z" fill="#d4edf3"/></svg></div>
    <div class="run"><svg viewBox="0 0 24 24"><path d="M2 0h20v19l-10 5-10-5z" fill="#a51f26"/><path d="m12 3 6 13-3 1-3-6-3 6-3-1zM9 18l3-3 3 3-3 2z" fill="#f1e5e3"/></svg></div>
  </div>
  <div class="tray">
    <svg width="24" height="16"><path d="m6 11 6-6 6 6" fill="none" stroke="#fff" stroke-width="1.300"/></svg>
    <svg width="24" height="20"><path d="M8 6h6v8H8zM14 9l3-2v6l-3-2M8 3q4-3 8 0M8 17q4 3 8 0" fill="none" stroke="#fff" stroke-width="1.200"/></svg>
    <svg width="24" height="20"><circle cx="12" cy="10" r="7.300" fill="#f5a21b"/><path d="M10.500 13v-2q-2-2 0-4.500 2-1 3 0 2 2.500 0 4.500v2z" fill="none" stroke="#6d4400" stroke-width="1.200"/></svg>
    <svg width="24" height="20"><path d="M7.500 5.500v12h9v-12M6 4.500h12M10 3h4" fill="#000" stroke="#fff" stroke-width="1.400"/><path d="M9 14h6v2H9z" fill="#20d0e0"/></svg>
    <svg width="24" height="20"><path d="M8 5h11v8H8M13 13v4M9 17h8M4 4h4v4H4zM6 8v6" fill="none" stroke="#fff" stroke-width="1.200"/></svg>
    <svg width="24" height="20"><path d="M4 8h2.500L10 4.500v11L6.500 12H4zM12.500 8q1.500 2 0 4M15 6q3 4 0 8M17.500 4q4 6 0 12" fill="none" stroke="#fff" stroke-width="1.200"/></svg>
    <span class="lang">ENG</span>
    <div class="time"><span>17:03</span><span>11.12.2020</span></div>
    <div class="peek"></div>
  </div>
</footer>
</body>
</html>
```

FILE: styles.css
```css
* { box-sizing: border-box; }
body {
  margin: 0; width: 1920px; height: 1080px; overflow: hidden;
  display: flex; flex-direction: column;
  background: #222; color: #dcdcdc;
  font: 13px/16px Roboto, "Noto Sans", sans-serif;
  letter-spacing: -.38px;
}
svg { display: block; flex: none; }
i, em, u { font-style: normal; text-decoration: none; }
.defs { position: absolute; }

/* title bar */
.titlebar { height: 28px; display: flex; border-bottom: 1px solid #000; overflow: hidden;
  background: repeating-linear-gradient(125deg, #2b2b2b 0 14px, #353535 14px 28px); flex: none; }
.logo { width: 46px; color: #fff; }
.wtab { position: relative; width: 133px; height: 27px; display: flex; align-items: center; padding: 1px 4px 0 5px; text-shadow: 1px 1px 0 #111; flex: none; }
.wtab::before { content: ""; position: absolute; z-index: 0; inset: 2px -10px 0 0;
  background: linear-gradient(#7e7e7e, #5b5b5b); clip-path: polygon(1px 0, 132px 0, 137px 3px, 143px 100%, 12px 100%, 7px 90%); }
.wtab > * { position: relative; z-index: 1; }
.wtab svg { width: 18px; height: 20px; margin-right: 5px; }
.wtab span { width: 87px; overflow: hidden; white-space: nowrap; }
.wtab i { margin-left: auto; width: 12px; color: #3d3d3d; text-shadow: none; font-size: 15px; }
.wtab.first { width: 135px; padding-left: 14px; }
.wtab.first::before { inset: 1px -10px 0 -8px; clip-path: polygon(12px 3px, 16px 0, 137px 0, 142px 3px, 100% 100%, 0 100%); }
.wtab.active { z-index: 2; }
.wtab.active::before { left: -10px; background: linear-gradient(#a6a6a6, #6d6d6d); clip-path: polygon(13px 3px, 17px 0, 140px 0, 145px 3px, 100% 100%, 0 100%); }
.wincontrols { flex: 1; display: flex; justify-content: flex-end; align-items: flex-start; padding-right: 3px; }
.cap { margin: 6px 11px 0 0; }
.wbtns { display: flex; height: 16px; border: 1px solid #8a8a8a; border-top: 0; background: linear-gradient(#5c5c5c, #3a3a3a); }
.wbtns b { width: 25px; display: flex; justify-content: center; align-items: center; border-left: 1px solid #8a8a8a; }
.wbtns b:first-child { border-left: 0; }
.wbtns .wide { width: 39px; }

.menubar { height: 19px; flex: none; display: flex; align-items: center; padding: 0 9px 1px 10px; background: linear-gradient(#262626, #151515); border-bottom: 1px solid #000; text-shadow: 1px 1px 0 #000; }
.menubar > span { margin-right: 19.500px; }
.parent { margin-left: auto; display: flex; gap: 7px; letter-spacing: -.05px; }
.parent em { color: #858585; letter-spacing: -.15px; }
.parent a { color: #eee; border-bottom: 1px dotted #eee; height: 16px; padding-top: 1px; }

.workspace { flex: 1; min-height: 0; display: flex; padding-top: 1px; }
.left { width: 223px; margin-left: 1px; margin-right: 5px; display: flex; flex-direction: column; }
.center { width: 1179px; margin-right: 5px; display: flex; flex-direction: column; }
.details { flex: 1; margin-right: 1px; display: flex; flex-direction: column; }
.details .body { height: 969px; background: #606060; border-radius: 0 0 3px 3px; }

.tabs { height: 22px; flex: none; display: flex; gap: 1px; padding-left: 4px; }
.tab { height: 22px; display: flex; align-items: center; padding: 0 6px 0 6px; background: #454545; border-radius: 3px 3px 0 0; text-shadow: 1px 1px 0 #000; }
.tab.on { background: #606060; }
.tab.major { background: linear-gradient(#a58c14, #606060 2px); }
.tab svg { width: 16px; height: 16px; margin-right: 6px; color: #a9b8ec; }
.tab.f svg { width: 13px; margin-right: 9px; }
.tab.major svg { width: 20px; margin: 0 5px 0 -2px; }
.tab span { flex: 1; overflow: hidden; white-space: nowrap; }
.tab i { width: 13px; text-align: right; font-size: 14px; color: #2c2c2c; text-shadow: none; padding-right: 3px; }
.w150 { width: 150px; }
.w107 { width: 107px; letter-spacing: -.25px; }
.tab.w107 svg { width: 16px; margin-right: 6px; }
.w129 { width: 129px; }

.frame { background: #3e3e3e; border: 2px solid #606060; border-radius: 0 0 4px 4px; flex: 1; display: flex; flex-direction: column; min-height: 0; }
.components { height: 332px; display: flex; flex-direction: column; }
.searchrow { height: 31px; background: #323232; display: flex; align-items: center; gap: 6px; padding: 0 3px 0; flex: none; }
.green { background: linear-gradient(#54ad54, #4ea24e); color: #fff; font-weight: 700; display: flex; align-items: center; justify-content: center; text-shadow: 1px 1px 0 #1c4a1c; border: 1px solid #3f8a3f; }
.big { width: 148px; height: 25px; font-size: 15px; gap: 3px; letter-spacing: -.2px; }
.small { width: 83px; height: 25px; gap: 3px; font-weight: 500; letter-spacing: -.25px; padding-right: 3px; }
.search { background: #c9c9c9; color: #808080; height: 19px; display: flex; align-items: center; border-radius: 2px; overflow: hidden; padding: 0 1px 0 5px; }
.search span { flex: 1; overflow: hidden; }
.s1 { width: 60px; }
.s2 { width: 86px; letter-spacing: -.15px; }
.treewrap { flex: 1; display: flex; min-height: 0; }
.tree { width: 203px; margin-right: -1px; padding-top: 4px; overflow: hidden; white-space: nowrap; letter-spacing: -.4px; }
.tree hr { height: 1px; border: 0; background: #646464; margin: 3px 4px 3px 4px; }
.trow { height: 20px; display: flex; align-items: center; }
.trow .ic { width: 16px; height: 16px; margin-right: 2px; }
.trow .tw { width: 8px; height: 8px; margin-left: -10px; margin-right: 2px; }
.l2 { padding-left: 32px; } .l3 { padding-left: 42px; } .l4 { padding-left: 52px; }
.move { padding-left: 22px; letter-spacing: -.53px; }
.move svg { margin-right: 1px; }
.sb { flex: 1; position: relative; display: flex; flex-direction: column; justify-content: flex-end; background: linear-gradient(90deg, transparent 7px, #5a5a5a 7px 8px, transparent 8px); }
.thumb { width: 12px; background: #fff; border: 1px solid #222; border-radius: 2px; height: 139px; margin: 0 0 3px 1px; }

.myblueprint { margin-top: 5px; height: 655px; display: flex; flex-direction: column; }
.addrow { height: 33px; display: flex; align-items: center; gap: 4px; padding: 0 0 1px 4px; background: #323232; border-radius: 3px; flex: none; }
.addrow .search { margin: 0 0 0 -2px; }
.addrow .search + svg { margin-left: 1px; }
.varwrap { flex: 1; display: flex; border-top: 1px solid #606060; box-shadow: inset 0 2px 2px #222; }
.vars { width: 203px; }
.varwrap .sb { background-color: #606060; background-image: linear-gradient(90deg, transparent 7px, #777 7px 8px, transparent 8px); padding-left: 1px; }
.varwrap .thumb { height: 173px; margin-bottom: 2px; }
.v { height: 22px; display: flex; align-items: center; padding: 0 4px 0 11px; letter-spacing: -.02px; }
.v:first-child { height: 21px; padding-bottom: 2px; }
.v span { flex: none; width: 148px; margin-left: 4px; overflow: hidden; white-space: nowrap; color: #dcdcdc; }
.vi { width: 14px; height: 14px; }
.vp { width: 14px; height: 8px; }
.sh { width: 16px; height: 15px; margin-left: 6px; margin-top: -2px; }
.red { color: #8a0000; } .yel { color: #e0ac1c; } .teal { color: #1fc896; } .pink { color: #d96f96; } .lime { color: #8fe83a; } .mag { color: #e000c8; }
.disp { height: 24px; border-top: 2px solid #606060; background: #303030; display: flex; align-items: center; justify-content: space-between; padding: 0 3px 0 10px; font-weight: 700; text-shadow: 1px 1px 0 #000; letter-spacing: .06px; }
.disp b { width: 20px; height: 18px; display: grid; place-items: center; background: #3c3c3c; }

/* toolbar */
.toolframe { height: 63px; background: #606060; padding: 2px; flex: none; border-radius: 0 0 2px 2px; }
.toolbar { width: 884px; height: 59px; background: #3e3e3e; border-radius: 3px; display: flex; position: relative; }
.tool { display: flex; flex-direction: column; align-items: center; height: 59px; padding-top: 1px; text-shadow: 1px 1px 0 #000; white-space: nowrap; flex: none; }
.t-compile { width: 56px; }
.dd { width: 9px; margin: 28px 8px 0 9px; color: #bbb; }
.t-save { width: 56px; border-left: 1px solid #5c5c5c; margin-left: 1px; }
.t-browse { width: 49px; }
.t-browse svg { margin-left: 3px; }
.t-hide { width: 101px; border-left: 1px solid #5c5c5c; padding-left: 2px; }
.t-hide + .dd { margin-left: 8px; }
.t-find { width: 56px; border-left: 1px solid #5c5c5c; }
.t-find svg { margin-left: -2px; }
.t-cs { width: 96px; border-left: 1px solid #5c5c5c; }
.t-cd { width: 94px; }
.t-sim { width: 80px; border-left: 1px solid #5c5c5c; }
.t-play { width: 54px; border-left: 1px solid #5c5c5c; }
.t-play svg { margin-left: -4px; }
.t-hide svg { margin-left: 2px; }
.debug { width: 159px; padding-top: 15px; display: flex; flex-direction: column; align-items: center; gap: 1px; margin-left: auto; margin-right: 4px; flex: none; }
.combo { width: 159px; height: 22px; background: #dedede; border: 1px solid #999; color: #111; display: flex; align-items: center; justify-content: center; gap: 2px; white-space: nowrap; letter-spacing: -.37px; }

.doc { margin-top: 5px; }
.graphframe { height: 721px; padding: 2px; background: #606060; border-radius: 0 0 2px 2px; flex: none; }
.graph {
  position: relative; width: 1175px; height: 717px; overflow: hidden; font-size: 9.500px; line-height: 12px; color: #e6e6e6;
  background:
    linear-gradient(90deg, #151515 1px, transparent 1px) 49px 0 / 96px 96px,
    linear-gradient(#151515 1px, transparent 1px) 0 87px / 96px 96px,
    linear-gradient(90deg, #343434 1px, transparent 1px) 1px 0 / 12px 12px,
    linear-gradient(#343434 1px, transparent 1px) 0 3px / 12px 12px, #262626;
}
.graph::after { content: ""; position: absolute; inset: 0; box-shadow: inset 0 0 45px rgba(0,0,0,.55); pointer-events: none; }
.wires { position: absolute; left: 0; top: 0; }
.node { position: absolute; letter-spacing: -.25px; white-space: nowrap; text-shadow: 0 0 2px #000; }
.std { background: rgba(13,16,13,.88); border: 1px solid #0a0a0a; border-radius: 5px; box-shadow: 0 2px 4px rgba(0,0,0,.7); overflow: hidden; }
.head { height: 28px; display: flex; padding: 1px 5px 0 6px; gap: 4px; box-shadow: inset 0 1px 0 rgba(255,255,255,.3); color: #6cc6f5; letter-spacing: 0; }
.head > div { flex: 1; }
.head b { display: block; color: #fff; font-weight: 700; line-height: 13px; }
.head em { font-style: italic; color: #b29560; display: block; line-height: 13px; letter-spacing: -.08px; }
.redh { background: linear-gradient(100deg, #a01818, #8a1212 45%, #3a1414 90%, #4a4a4a); gap: 2px; padding-left: 5px; }
.redh > svg { margin-top: 1px; }
.redh .deleg { margin-top: 8px; margin-right: -2px; }
.blueh { height: 17px; background: linear-gradient(100deg, #4580a5, #3a6d8e 28%, #203a48 50%, #18262c); }
.greenh { background: linear-gradient(100deg, #5c8f5c, #4c774c 50%, rgba(30,51,30,.8)); color: #a0f090; }
.greenh em { color: #a3b56c; text-shadow: none; }
.row { display: flex; align-items: center; height: 20px; color: #ffc61e; }
.row span, .row output { color: #e6e6e6; }
.row > span { margin-left: 4px; }
.ex { width: 9px; height: 10px; }
.pn { width: 12px; height: 10px; color: #ffc61e; }
.row .out { margin-left: auto; }
.row .out + svg { margin-left: 4px; }
.end { justify-content: flex-end; padding: 4px 8px 0 0; }
.dim { opacity: .8; }
.row .blue, .blue { color: #00a2f0; }
.magenta, .magenta .pn { color: #ff00d4; }
.dred .pn { color: #850000; } .dblue .pn { color: #0a4aa8; } .lime2 .pn { color: #8ee03a; }
.var { height: 49px; padding: 7px 9px 0 8px; border-radius: 11px; border: 1px solid #151515; box-shadow: inset 0 1px 1px rgba(210,210,210,.6), 0 2px 4px rgba(0,0,0,.7);
  background: radial-gradient(ellipse 80px 25px at 50% 0, rgba(190,155,45,.85), rgba(120,100,30,.25) 60%, transparent), linear-gradient(rgba(120,120,120,.7), rgba(35,35,35,.75) 35%, rgba(20,20,20,.75)); }
.var h4 { margin: -2px 0 -9px; height: 11px; line-height: 13px; text-align: center; font-size: 10px; padding-left: 1px; }
.var .row.x { justify-content: space-between; padding-right: 1px; }
.row.x + .row { margin-left: -1px; }
.get { height: 24px; border-radius: 12px; padding: 0 10px 1px 11px; display: flex; align-items: center; justify-content: flex-end; gap: 4px; }
.cyan { background: radial-gradient(ellipse 45px 18px at 45% 0, rgba(20,120,170,.9), rgba(15,80,120,.4) 70%, transparent), linear-gradient(rgba(120,120,120,.7), rgba(25,25,25,.75) 45%); }
.plain { background: linear-gradient(rgba(110,110,110,.9), rgba(45,45,45,.8) 35%, rgba(25,25,25,.8)); display: flex; align-items: center; justify-content: space-between; padding: 0 8px 1px 6px; color: #999; }
.ins { display: flex; flex-direction: column; gap: 7px; }
.plain b { font-size: 16px; }
.plain .dot { width: 5px; height: 6px; border-radius: 3px; background: #999; }
.offscreen { left: 866px; top: -30px; width: 123px; height: 51px; display: flex; justify-content: flex-end; align-items: flex-end; padding: 0 7px 5px 0; }
.n-event { left: 51px; top: 208px; width: 113px; height: 54px; }
.n-set1 { left: 195px; top: 232px; width: 183px; }
.n-delay { left: 387px; top: 220px; width: 174px; height: 65px; overflow: visible; }
.n-delay .head { border-radius: 4px 4px 0 0; }
.n-set2 { left: 579px; top: 232px; width: 183px; }
.n-set3 { left: 771px; top: 232px; width: 133px; }
.n-world { left: 147px; top: 340px; width: 155px; height: 52px; }
.n-world .row { padding: 3px 8px 0 7px; }
.n-cam { left: 27px; top: 364px; width: 98px; }
.n-g2 { left: 555px; top: 316px; width: 150px; }
.n-g1 { left: 555px; top: 352px; width: 150px; }
.n-sub { left: 723px; top: 341px; width: 77px; height: 37px; }
.n-conv { left: 927px; top: 257px; width: 77px; height: 27px; }
.n-print { left: 1010px; top: 220px; width: 143px; height: 182px; }
.latent { position: absolute; right: -8px; top: -11px; }
.d1 { padding: 1px 8px 0 7px; height: 23px; } .d2 { padding: 1px 7px 0; }
.d2 > span { margin-top: -4px; }
output { border: 1px solid #aaa; line-height: 12px; height: 14px; padding: 0 3px; margin-left: 2px; color: #bbb; font-size: 10px; letter-spacing: -.1px; }
.n-print .row { padding: 0 8px 0 8px; }
.n-print .p1 { height: 23px; }
.n-print .p2 { height: 17px; }
.n-print .row.p3, .n-print .row.p4 { height: 24px; padding-top: 1px; }
.n-print .row.p5 { height: 22px; padding-top: 2px; }
.n-print .row > span { margin-left: 3px; }
.p3 > span, .p4 > span, .p5 > span { margin-top: -4px; }
.chk { width: 13px; height: 13px; margin-left: 4px; }
.swatch { width: 14px; height: 14px; background: #00d0ff; border: 1px solid #777; margin-left: 3px; }
.dev { height: 14px; line-height: 14px; margin-top: 3px; text-align: center; letter-spacing: -.15px; background: repeating-linear-gradient(135deg, #5c5c10 0 9px, #14160f 9px 17px); }
.adv { display: flex; justify-content: center; padding-top: 4px; }

.crumbs { position: absolute; left: 0; top: 0; width: 1175px; height: 41px; background: rgba(8,8,8,.62); display: flex; align-items: center; font-size: 20px; line-height: 24px; color: #8c8c8c; padding: 0 0 2px 7px; z-index: 2; letter-spacing: -.28px; }
.star { margin-right: 19px; }
.nav1 { margin-right: 25px; } .nav2 { margin-right: 27px; }
.gi { margin-right: 14px; }
.crumbs::before, .crumbs::after { content: ""; position: absolute; top: 4px; bottom: 4px; width: 1px; background: #4a4a4a; left: 34px; }
.crumbs::after { left: 121px; }
.chev { margin: 0 9px 0 8px; }
.crumbs strong { margin-left: auto; margin-right: 5px; color: #303030; margin-top: -3px; font-weight: 700; letter-spacing: -.8px; }
.watermark { position: absolute; right: 10px; bottom: 17px; font-size: 65px; line-height: 62px; font-weight: 700; color: rgba(125,125,125,.42); transform: scaleX(.86); transform-origin: right; }

.res { margin-top: 5px; }
.results { height: 130px; background: #606060; padding: 2px; flex: none; }
.findrow { display: flex; gap: 4px; height: 21px; }
.find { width: 1144px; background: #cbcbcb; color: #858585; border-radius: 2px; display: flex; align-items: center; justify-content: space-between; padding: 0 0 0 5px; letter-spacing: -.42px; }
.bino { width: 24px; background: #d5d5d5; border: 1px solid #333; border-radius: 2px; display: grid; place-items: center; }
.list { margin-top: 4px; height: 101px; border: 1px solid #000; background: linear-gradient(#292929, #1c1c1c 35%, #191919 80%, #1e1e1e); }

/* desktop task bar */
.taskbar { height: 40px; flex: none; background: #7c0f48; display: flex; }
.start { width: 342px; display: flex; gap: 31px; align-items: center; padding-left: 16px; }
.apps { display: flex; }
.apps > div { width: 49px; height: 40px; display: grid; place-items: center; border: solid transparent; border-width: 0 4px; }
.apps svg { width: 24px; height: 24px; }
.apps .run { background: linear-gradient(#d28cb8, #d28cb8) 50% 100% / 100% 2px no-repeat; background-clip: padding-box; }
.apps .cur { border: 0; background: linear-gradient(#d9a0c0, #d9a0c0) 50% 100% / 100% 2px no-repeat, #9d2b69; }
.tray { margin-left: auto; display: flex; align-items: center; color: #fff; font: 12px/24px "Open Sans", "Noto Sans", sans-serif; }
.lang { width: 26px; text-align: center; margin: 0 9px 0 5px; letter-spacing: -.3px; }
.time { display: flex; flex-direction: column; align-items: center; line-height: 18px; width: 60px; margin-right: 2px; letter-spacing: -.3px; padding-bottom: 3px; }
.peek { width: 5px; height: 40px; border-left: 1px solid #a85a82; }
```
